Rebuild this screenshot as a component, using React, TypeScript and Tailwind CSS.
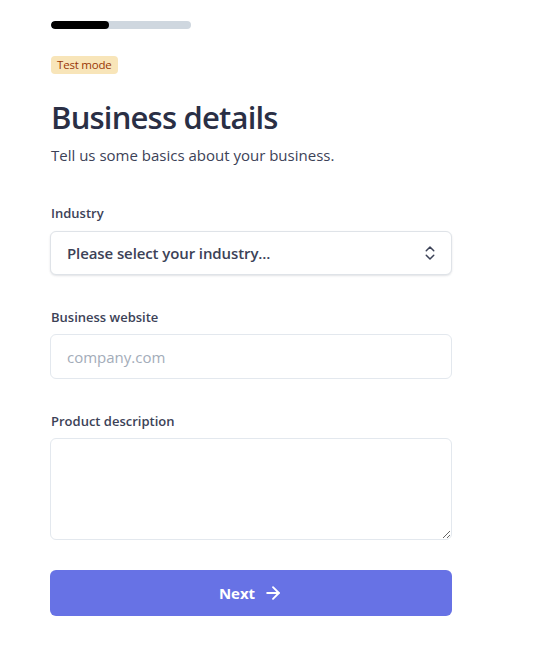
import React from 'react';
import { ChevronsUpDown, ArrowRight } from 'lucide-react';

export default function App() {
  return (
    <div className="min-h-screen bg-white" style={{ fontFamily: '"Open Sans", "Noto Sans", sans-serif' }}>
      <div className="pl-[50px] pt-[21px] w-[452px]">
        {/* progress */}
        <div className="ml-px flex h-2 w-[140px] overflow-hidden rounded-full bg-[#cfd7df]">
          <div className="w-[58px] bg-black rounded-full" />
        </div>

        <div className="mt-[27px] ml-px inline-flex h-[18px] items-center rounded bg-[#f8e5b9] px-[6px] text-[11.5px] text-[#983705] tracking-[-0.2px]">
          Test mode
        </div>

        <h1 className="mt-[22px] ml-px text-[31px] leading-[40px] font-semibold text-[#2a2f45] tracking-[-0.8px]">
          Business details
        </h1>
        <p className="mt-[7px] ml-px text-[15px] leading-[22px] text-[#3c4257]">
          Tell us some basics about your business.
        </p>

        <label className="mt-[37px] ml-px block text-[13px] leading-5 font-semibold text-[#3c4257]">Industry</label>
        <div className="mt-2 flex h-[44px] items-center justify-between rounded-md border border-[#dfe3e8] bg-white pl-4 pr-3 shadow-[0_1px_2px_rgba(60,66,87,0.15)]">
          <span className="text-[15px] font-semibold text-[#3c4257] tracking-[-0.1px]">Please select your industry...</span>
          <ChevronsUpDown className="h-[18px] w-[18px] text-[#3c4257]" strokeWidth={2} />
        </div>

        <label className="mt-8 ml-px block text-[13px] leading-5 font-semibold text-[#3c4257]">Business website</label>
        <div className="mt-[7px] flex h-[45px] items-center rounded-md border border-[#e3e8ee] bg-white px-4">
          <span className="text-[15px] text-[#a3acb9]">company.com</span>
        </div>

        <label className="mt-8 ml-px block text-[13px] leading-5 font-semibold text-[#3c4257]">Product description</label>
        <textarea className="mt-[7px] block h-[102px] w-full rounded-md border border-[#e3e8ee] bg-white px-4 py-3 outline-none" />

        <button className="mt-[30px] flex h-[46px] w-full items-center justify-center gap-2 rounded-md bg-[#6772e5] text-[15px] font-bold text-white">
          Next
          <ArrowRight className="h-5 w-5" strokeWidth={2.25} />
        </button>
      </div>
    </div>
  );
}
